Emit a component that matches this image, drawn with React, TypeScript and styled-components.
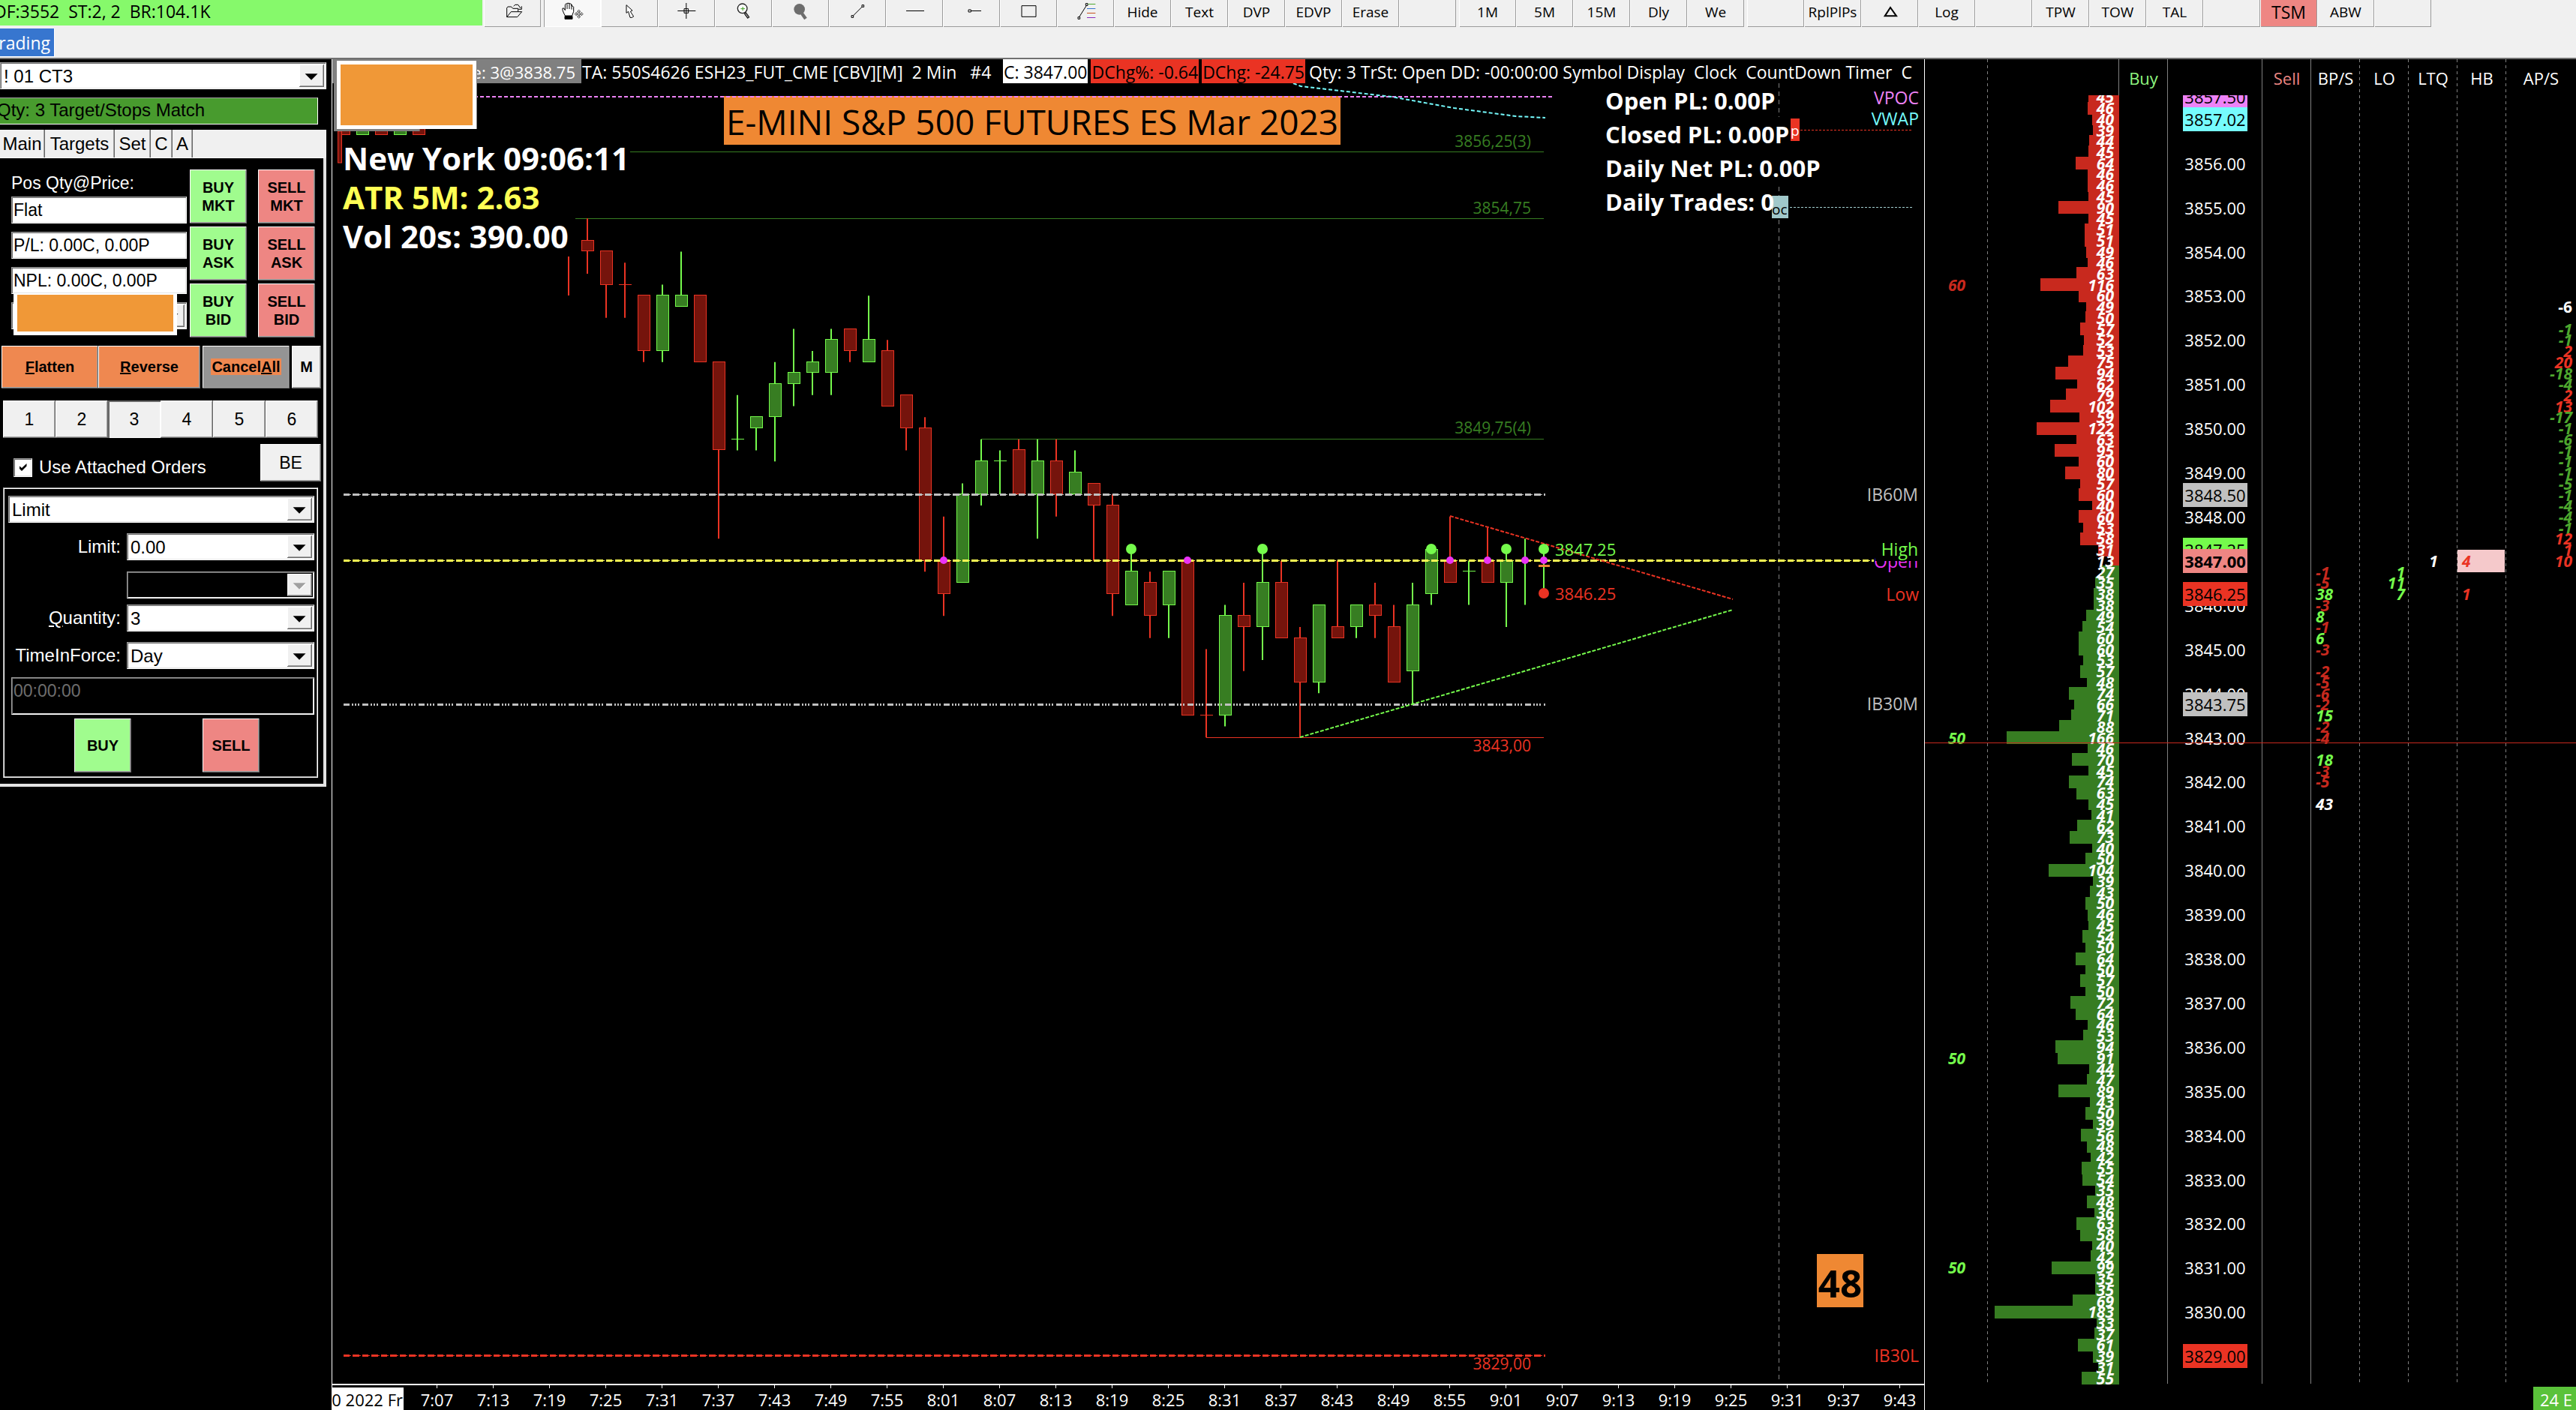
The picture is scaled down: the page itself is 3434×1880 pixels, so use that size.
import React from 'react';
import styled, { createGlobalStyle, css } from 'styled-components';

const UI = `'Open Sans', 'Noto Sans', sans-serif`;
const CLASSIC = `'Liberation Sans', Arial, sans-serif`;

const color = {
  face: '#f0f0f0',
  lime: '#75fb4c',
  green: '#377d22',
  red: '#ea3323',
  darkRed: '#c8291e',
  maroon: '#75140c',
  salmon: '#ee8683',
  mint: '#a0fc8e',
  orange: '#ef8833',
  magenta: '#ea33f7',
  violet: '#ee82f7',
  cyan: '#75fbfd',
  yellow: '#ffff54',
  silver: '#c0c0c0',
  grid: '#7f7f7f',
};

const GlobalStyle = createGlobalStyle`
  *, *::before, *::after { box-sizing: border-box; }
  body { margin: 0; background: #000; overflow: hidden; }
  button, input, select { font: inherit; margin: 0; padding: 0; border: 0; border-radius: 0; }
`;

const Page = styled.div`
  display: flex;
  flex-direction: column;
  height: 100vh;
  background: #000;
  color: #fff;
  font-family: ${UI};
  font-size: 22px;
`;

/* ---------- top bars ---------- */

const TopBar = styled.header`
  flex: none;
  background: ${color.face};
  border-bottom: 2px solid #707070;
`;

const ToolRow = styled.div`
  display: flex;
  height: 36px;
`;

const Status = styled.div`
  flex: none;
  width: 643px;
  height: 34px;
  margin-right: 2px;
  background: #86f96b;
  color: #000;
  font-size: 23px;
  line-height: 31px;
  text-indent: -8px;
  white-space: pre;
  overflow: hidden;
`;

const ToolGroup = styled.div`
  display: flex;
  margin-right: 4px;
`;

const Tool = styled.button<{ $mode?: 'pressed' | 'alert' }>`
  flex: none;
  width: 76px;
  height: 36px;
  padding-bottom: 4px;
  color: #000;
  font-size: 19px;
  line-height: 30px;
  background: ${color.face};
  box-shadow: inset 1px 0 #fff, inset -1px -1px #9b9b9b;
  ${p => p.$mode === 'pressed' && css`
    background: #f8f8f8;
    box-shadow: inset 1px 0 #9b9b9b, inset -1px -1px #fff;
  `}
  ${p => p.$mode === 'alert' && css`
    background: ${color.salmon};
    font-size: 23px;
  `}
  svg { display: block; }
`;

const TabRow = styled.nav`
  display: flex;
  height: 41px;
  padding-top: 2px;
`;

const WorkTab = styled.button`
  display: flex;
  justify-content: flex-end;
  align-items: center;
  width: 73px;
  height: 38px;
  padding-right: 5px;
  overflow: hidden;
  background: #3776cf;
  border-right: 1px solid #fff;
  border-bottom: 1px solid #fff;
  color: #fff;
  font-size: 23px;
`;

const Main = styled.main`
  flex: 1;
  display: flex;
  min-height: 0;
`;

/* ---------- order entry ---------- */

const raised = css`
  box-shadow: inset -1px -1px #696969, inset 1px 1px #fff, inset -2px -2px #a0a0a0;
`;
const sunken = css`
  border: 1px solid;
  border-color: #a0a0a0 #fff #fff #a0a0a0;
  box-shadow: inset 1px 1px #696969, inset -1px -1px #e3e3e3;
`;

const Entry = styled.aside`
  flex: none;
  width: 442px;
  padding-top: 4px;
  font-family: ${CLASSIC};
  font-size: 24px;
`;

const Combo = styled.div<{ $disabled?: boolean }>`
  ${sunken}
  display: flex;
  height: 36px;
  padding: 2px;
  background: ${p => (p.$disabled ? '#000' : '#fff')};
  select {
    appearance: none;
    flex: 1;
    min-width: 0;
    padding-left: 2px;
    background: transparent;
    color: #000;
    outline: none;
  }
  svg {
    ${raised}
    flex: none;
    width: 33px;
    height: 100%;
    background: ${color.face};
  }
`;

const AccountCombo = styled.div`
  width: 435px;
  margin-bottom: 11px;
`;

const MatchNote = styled.div`
  width: 424px;
  height: 36px;
  margin-bottom: 7px;
  background: #489b2e;
  border-top: 1px solid #a0a0a0;
  border-right: 1px solid #fff;
  border-bottom: 1px solid #fff;
  color: #000;
  line-height: 32px;
  text-indent: -4px;
`;

const TabStrip = styled.div`
  display: flex;
  width: 435px;
  height: 37px;
  background: ${color.face};
`;

const StripTab = styled.button<{ $w: number }>`
  width: ${p => p.$w}px;
  background: ${color.face};
  color: #000;
  border-right: 1px solid #696969;
  box-shadow: inset -1px 0 #a0a0a0;
  text-align: center;
  white-space: nowrap;
`;

const TabPage = styled.div`
  display: flex;
  flex-direction: column;
  width: 435px;
  border-top: 1px solid #fff;
  border-right: 4px solid #e3e3e3;
  border-bottom: 4px solid #e3e3e3;
  padding: 15px 0 8px 4px;
`;

const Position = styled.div`
  display: flex;
  height: 224px;
  margin-bottom: 11px;
`;

const Fields = styled.div`
  flex: none;
  display: flex;
  flex-direction: column;
  gap: 11px;
  width: 234px;
  margin: 5px 4px 0 11px;
  font-size: 23px;
`;

const FieldLabel = styled.label`
  display: flex;
  flex-direction: column;
  gap: 4px;
  line-height: 27px;
`;

const Readout = styled.input`
  ${sunken}
  width: 100%;
  height: 36px;
  padding-left: 2px;
  background: #fff;
  color: #000;
`;

const CoveredCombo = styled.div`
  position: relative;
`;

const Cover = styled.div`
  position: absolute;
  left: 3px;
  top: -11px;
  width: 218px;
  height: 55px;
  background: #f09837;
  border: 5px solid #fff;
  border-top-width: 1px;
`;

const TradeColumn = styled.div`
  flex: none;
  display: flex;
  flex-direction: column;
  gap: 4px;
  & + & { margin-left: 15px; }
`;

const TradeButton = styled.button<{ $side: 'buy' | 'sell' }>`
  ${raised}
  flex: none;
  width: 76px;
  height: 72px;
  background: ${p => (p.$side === 'buy' ? color.mint : color.salmon)};
  color: #000;
  font-size: 20px;
  font-weight: 700;
  line-height: 24px;
`;

const ActionRow = styled.div`
  display: flex;
  gap: 3px;
  height: 57px;
  margin: 0 0 16px -2px;
`;

const ActionPair = styled.div`
  display: flex;
`;

const Action = styled.button<{ $w: number; $bg: string }>`
  ${raised}
  flex: none;
  width: ${p => p.$w}px;
  height: 57px;
  background: ${p => p.$bg};
  color: #000;
  font-size: 20px;
  font-weight: 700;
  mark { background: #ef8850; color: #000; padding: 0 1px; }
`;

const NumberRow = styled.div`
  display: flex;
  margin-bottom: 8px;
`;

const NumberButton = styled.button<{ $active?: boolean }>`
  width: 70px;
  height: 50px;
  background: ${color.face};
  color: #000;
  font-size: 23px;
  ${p => (p.$active
    ? css`box-shadow: inset 2px 2px #696969, inset -1px -1px #fff;`
    : raised)}
`;

const AttachRow = styled.div`
  display: flex;
  justify-content: space-between;
  width: 424px;
  height: 50px;
  margin-bottom: 8px;
`;

const AttachLabel = styled.label`
  display: flex;
  align-items: center;
  gap: 9px;
  padding: 12px 0 0 14px;
  white-space: nowrap;
  font-size: 24px;
  input {
    ${sunken}
    appearance: none;
    width: 25px;
    height: 25px;
    background: #fff;
    display: grid;
    place-items: center;
  }
  input:checked::before {
    content: '';
    width: 10px;
    height: 10px;
    background: #000;
    clip-path: polygon(0 30%, 35% 60%, 100% 0, 100% 35%, 35% 100%, 0 65%);
  }
`;

const SmallButton = styled.button`
  ${raised}
  width: 81px;
  height: 50px;
  background: ${color.face};
  color: #000;
  font-size: 23px;
`;

const OrderBox = styled.form`
  display: flex;
  flex-direction: column;
  width: 420px;
  padding: 10px 4px 6px 6px;
  border: 1px solid #a0a0a0;
  border-color: #a0a0a0 #fff #fff #a0a0a0;
  box-shadow: inset 1px 1px #fff, inset -1px -1px #a0a0a0;
`;

const OrderType = styled.div`
  margin-bottom: 14px;
`;

const OrderRow = styled.div<{ $after: number }>`
  display: grid;
  grid-template-columns: 150px 1fr;
  gap: 8px;
  align-items: center;
  margin-bottom: ${p => p.$after}px;
  label { text-align: right; }
`;

const TimeBox = styled.input`
  ${sunken}
  height: 50px;
  margin: 0 0 5px 4px;
  padding: 0 2px 14px;
  background: #000;
  color: #6d6d6d;
  font-size: 23px;
`;

const SubmitRow = styled.div`
  display: flex;
  gap: 95px;
  padding-left: 88px;
`;

/* ---------- chart ---------- */

const ChartPanel = styled.section`
  position: relative;
  flex: 1;
  min-width: 0;
  display: flex;
  flex-direction: column;
  border-left: 1px solid #fff;
  overflow: hidden;
`;

const ChartHead = styled.div`
  flex: none;
  display: flex;
  height: 32px;
  font-size: 23px;
  line-height: 34px;
  white-space: pre;
  overflow: hidden;
`;

const HeadTag = styled.span<{ $bg?: string; $fg?: string }>`
  flex: none;
  margin-right: 4px;
  padding: 0 1px;
  background: ${p => p.$bg ?? 'transparent'};
  color: ${p => p.$fg ?? '#fff'};
`;

const OrderTag = styled(HeadTag)`
  width: 332px;
  margin-right: 0;
  padding-right: 8px;
  font-size: 22px;
  text-align: right;
`;

const SymbolTag = styled(HeadTag)`
  min-width: 558px;
`;

const Plot = styled.svg`
  flex: 1;
  width: 100%;
  min-height: 0;
  display: block;
  position: relative;
  font-family: ${UI};
`;

const TimeAxis = styled.div`
  flex: none;
  display: flex;
  height: 35px;
  border-top: 2px solid #fff;
  line-height: 39px;
`;

const DateBox = styled.div`
  flex: none;
  display: flex;
  justify-content: flex-end;
  width: 95px;
  height: 31px;
  margin: 3px 7px 0 0;
  padding-right: 1px;
  background: #fff;
  color: #000;
  line-height: 32px;
  white-space: nowrap;
  overflow: hidden;
`;

const TimeTick = styled.div`
  flex: 0 0 75px;
  text-align: center;
  background: linear-gradient(#fff, #fff) 37px 0 / 1px 4px no-repeat;
`;

const Covered = styled.div`
  position: absolute;
  left: 2px;
  top: 0;
  width: 191px;
  height: 96px;
  padding: 2px 0 0 4px;
  background: #808080;
  clip-path: polygon(0 0, 100% 0, 100% 93px, 60% 93px, 60% 100%, 0 100%);
  &::before {
    content: '';
    display: block;
    width: 186px;
    height: 91px;
    border: 5px solid #fff;
    background: #f09837;
  }
`;

const Title = styled.h1`
  position: absolute;
  left: 522px;
  top: 49px;
  height: 65px;
  margin: 0;
  padding: 0 3px;
  background: ${color.orange};
  color: #000;
  font-size: 46px;
  font-weight: 400;
  line-height: 69px;
  white-space: nowrap;
`;

const Readings = styled.div`
  position: absolute;
  left: 14px;
  top: 106px;
  font-size: 42px;
  font-weight: 700;
  line-height: 52px;
  div:nth-child(2) { color: ${color.yellow}; }
`;

const Results = styled.div`
  position: absolute;
  left: 1697px;
  top: 33px;
  font-size: 31px;
  font-weight: 700;
  line-height: 45px;
`;

const Countdown = styled.div`
  position: absolute;
  right: 81px;
  bottom: 137px;
  width: 62px;
  height: 71px;
  background: ${color.orange};
  color: #000;
  font-size: 51px;
  font-weight: 700;
  line-height: 77px;
  text-align: center;
`;

/* ---------- ladder ---------- */

const LadderPanel = styled.section`
  flex: none;
  width: 869px;
  display: flex;
  flex-direction: column;
  border-left: 1px solid #fff;
  overflow: hidden;
`;

const Ladder = styled.div`
  flex: 1;
  min-height: 0;
  position: relative;
  display: grid;
  grid-template-columns: 84px 175px 65px 126px 65px 65px 65px 65px 65px 1fr;
  grid-template-rows: 43px repeat(117, minmax(0, 1fr));
`;

const Rail = styled.div<{ $dash?: boolean }>`
  grid-row: 1 / -1;
  background: linear-gradient(${color.grid}, ${color.grid}) right top / 1px 100% no-repeat;
  ${p => p.$dash && css`
    background: repeating-linear-gradient(${color.grid} 0 4px, transparent 4px 8px) right top / 1px 100% no-repeat;
  `}
`;

const HeadCell = styled.div<{ $fg: string }>`
  grid-row: 1;
  align-self: center;
  padding-top: 7px;
  text-align: center;
  color: ${p => p.$fg};
`;

const Lane = styled.div`
  grid-row: 2 / -1;
  display: grid;
  grid-template-rows: repeat(117, minmax(0, 1fr));
  clip-path: inset(5px 0 -2px 0);
`;

const Bar = styled.div<{ $bg: string }>`
  grid-column: 1;
  justify-self: end;
  align-self: center;
  height: 17px;
  background: ${p => p.$bg};
`;

const BarText = styled.span`
  grid-column: 1;
  justify-self: end;
  align-self: center;
  padding-right: 7px;
  font-size: 21px;
  font-weight: 700;
  font-style: italic;
  line-height: 24px;
`;

const Figure = styled.div<{ $fg: string; $align?: string; $upright?: boolean }>`
  align-self: center;
  padding: 0 5px 0 6px;
  color: ${p => p.$fg};
  font-size: 21px;
  font-weight: 700;
  font-style: ${p => (p.$upright ? 'normal' : 'italic')};
  line-height: 24px;
  text-align: ${p => p.$align ?? 'left'};
`;

const HitCell = styled.div`
  align-self: center;
  height: 30px;
  margin-right: 2px;
  background: #f5c9cb;
`;

const Price = styled.div<{ $bg?: string; $last?: boolean }>`
  grid-column: 1;
  justify-self: center;
  align-self: center;
  height: 32px;
  padding: 0 2px;
  line-height: 32px;
  background: ${p => p.$bg ?? 'transparent'};
  color: ${p => (p.$bg ? '#000' : '#fff')};
  font-weight: ${p => (p.$last ? 700 : 400)};
`;

const StopLine = styled.div`
  position: absolute;
  left: 0;
  right: 0;
  top: 911px;
  height: 1px;
  background: ${color.darkRed};
`;

const LadderFoot = styled.footer`
  flex: none;
  display: flex;
  justify-content: flex-end;
  height: 35px;
  padding-top: 4px;
`;

const Clock = styled.div`
  width: 57px;
  padding-left: 9px;
  background: #5ac23a;
  line-height: 34px;
  white-space: nowrap;
  overflow: hidden;
`;

/* ---------- toolbar icons ---------- */

const Icon = ({ box, children }: { box: string; children: React.ReactNode }) => (
  <svg width="76" height="36" viewBox={box} fill="none" stroke="#000" strokeWidth="3">{children}</svg>
);
const zoomed = (start: number) => `${start} 0 228 108`;

const icons: Record<string, React.ReactNode> = {
  Open: (
    <Icon box={zoomed(-45)}>
      <path d="M47 68V31l4-4h14l6 7h21v12M47 68l17-21h43L89 68z" />
      <path d="M74 25l6-6h12l10 14M106 25v12H94" />
    </Icon>
  ),
  Scroll: (
    <Icon box={zoomed(200)}>
      <path fill="#fff" d="M285 63l-6-12-4-10v-8h5l5 8V20l3-5h4l1-2h9l1 2h4l4 3v6h4l4 4v18l-6 17z" />
      <path d="M293 16v20M302 14v22M311 18v20" />
      <path fill="#000" d="M284 65h30v11h-30z" />
      <path fill="#fff" strokeWidth="2" d="M340 39l-6 7h4v8h-8v-4l-7 6 7 6v-4h8v8h-4l6 7 6-7h-4v-8h8v4l7-6-7-6v4h-8v-8h4z" />
    </Icon>
  ),
  Pointer: (
    <Icon box={zoomed(428)}><path fill="#fff" d="M530 20v32l8-6 7 24h7l7-4-13-20 8-4z" /></Icon>
  ),
  Crosshair: (
    <Icon box={zoomed(656)}><path d="M735 43.500h72M769.500 12v63M761 35h17v17h-17z" /></Icon>
  ),
  'Zoom in': (
    <Icon box={zoomed(884)}>
      <path strokeWidth="11" stroke="#222" d="M1004 51l15 21" />
      <path stroke="#c9c9c9" d="M1006 54l11 15" />
      <circle cx="994" cy="34" r="19" fill="#fff" stroke="#222" strokeWidth="4" />
      <path stroke="#3fa024" d="M987 35h17M995.500 27v16" />
    </Icon>
  ),
  'Zoom out': (
    <Icon box={zoomed(1112)}>
      <circle cx="1222" cy="37" r="22" fill="#6d6d6d" stroke="none" />
      <path stroke="#6d6d6d" strokeWidth="13" d="M1232 54l15 21" />
    </Icon>
  ),
  'Trend line': (
    <Icon box={zoomed(1340)}><path d="M1438 62l34-34M1430 62h8v8h-8zM1472 20h8v8h-8z" /></Icon>
  ),
  'Horizontal line': <Icon box="0 0 228 108"><path d="M81 43.500h72" /></Icon>,
  Ray: <Icon box="0 0 228 108"><path d="M113 43.500h40M102 39h10v9h-10z" /></Icon>,
  Rectangle: <Icon box="0 0 228 108"><path d="M87 23h57v44H87z" /></Icon>,
  Retracement: (
    <Icon box="0 0 228 108">
      <path d="M89 68l29-46M84 68h8v8h-8zM115 14h8v8h-8z" />
      <path stroke="#4ea72e" d="M124 16.500h30" />
      <path stroke="#3776cf" d="M120 34.500h34" />
      <path stroke="#c8501e" d="M120 52.500h34" />
      <path stroke="#8a2bbf" d="M120 70.500h34" />
    </Icon>
  ),
  Delta: <Icon box="0 0 228 108"><path strokeWidth="6" d="M95 64l22-34 24 34z" /></Icon>,
};

const toolGroups: string[][] = [
  ['Open'],
  ['Scroll', 'Pointer', 'Crosshair', 'Zoom in', 'Zoom out', 'Trend line', 'Horizontal line', 'Ray', 'Rectangle',
    'Retracement', 'Hide', 'Text', 'DVP', 'EDVP', 'Erase', ''],
  ['1M', '5M', '15M', 'Dly', 'We'],
  ['', 'RplPlPs', 'Delta', 'Log', '', 'TPW', 'TOW', 'TAL', '', 'TSM', 'ABW', ''],
];

const Arrow = ({ off }: { off?: boolean }) => (
  <svg viewBox="0 0 33 32" aria-hidden="true">
    {off && <path fill="#fff" d="M8 14h18l-9 9z" />}
    <path fill={off ? '#a0a0a0' : '#000'} d="M7 13h18l-9 9z" />
  </svg>
);

const Drop = ({ id, label, value, disabled }: { id: string; label?: string; value: string; disabled?: boolean }) => (
  <Combo $disabled={disabled}>
    <select id={id} aria-label={label} disabled={disabled} defaultValue={value}>
      <option value={value}>{value}</option>
    </select>
    <Arrow off={disabled} />
  </Combo>
);

/* ---------- chart data ---------- */

const TICK = 14.72;
const TOP = 291.3;
const yTick = (t: number) => TOP + t * TICK;

// side, body top, body bottom, high, low: quarter-point ticks below 3854.75
type Candle = ['r' | 'g', number, number, number, number];
const candles: Candle[] = [
  ['r', 2, 3, 0, 5], ['r', 3, 6, 3, 9], ['r', 6, 6, 4, 9], ['r', 7, 12, 7, 13], ['g', 7, 12, 6, 13],
  ['g', 7, 8, 3, 8], ['r', 7, 13, 7, 13], ['r', 13, 21, 13, 29], ['g', 20, 20, 16, 21], ['g', 18, 19, 18, 21],
  ['g', 15, 18, 13, 22], ['g', 14, 15, 10, 17], ['g', 13, 14, 12, 16], ['g', 11, 14, 10, 16], ['r', 10, 12, 10, 13],
  ['g', 11, 13, 7, 13], ['r', 12, 17, 11, 17], ['r', 16, 19, 16, 21], ['r', 19, 31, 18, 32], ['r', 31, 34, 27, 36],
  ['g', 25, 33, 24, 33], ['g', 22, 25, 20, 26], ['g', 22, 22, 21, 25], ['r', 21, 25, 20, 25], ['g', 22, 25, 20, 29],
  ['r', 22, 25, 20, 27], ['g', 23, 25, 21, 25], ['r', 24, 26, 24, 31], ['r', 26, 34, 25, 36], ['g', 32, 35, 30, 35],
  ['r', 33, 36, 32, 38], ['g', 32, 35, 32, 38], ['r', 31, 45, 31, 45], ['r', 45, 45, 39, 47], ['g', 36, 45, 35, 46],
  ['r', 36, 37, 33, 41], ['g', 33, 37, 30, 40], ['r', 33, 38, 31, 38], ['r', 38, 42, 37, 47], ['g', 35, 42, 35, 43],
  ['r', 37, 38, 31, 38], ['g', 35, 37, 35, 38], ['r', 35, 36, 33, 38], ['r', 37, 42, 35, 42], ['g', 35, 41, 33, 44],
  ['g', 30, 34, 30, 35], ['r', 31, 33, 27, 33], ['g', 32, 32, 31, 35], ['r', 31, 33, 28, 33], ['g', 31, 33, 30, 37],
  ['g', 31, 31, 29, 35], ['g', 31, 31, 30, 34],
];
const xBar = (i: number) => 783 + 25 * i;

const greenDots = [29, 36, 45, 49, 51];
const magentaDots = [19, 32, 46, 48, 50, 51];

const times = Array.from({ length: 27 }, (_, i) => {
  const m = 7 * 60 + 7 + i * 6;
  return `${Math.floor(m / 60)}:${String(m % 60).padStart(2, '0')}`;
});

const EARLY: Array<[number, 'r' | 'g']> = [[450, 'r'], [475, 'g'], [500, 'r'], [525, 'g'], [550, 'r']];

const stroke = { r: color.red, g: color.lime };
const fill = { r: color.maroon, g: color.green };

const Note = ({ x, y, c, end, size = 23, children }: {
  x: number; y: number; c: string; end?: boolean; size?: number; children: string;
}) => (
  <text x={x} y={y + (size > 21 ? 8 : 7)} fill={c} fontSize={size} textAnchor={end ? 'end' : 'start'}>{children}</text>
);

const ChartPlot = () => (
  <Plot role="img" aria-label="Two minute candles">
    <g transform="translate(-443 -111)">
      <g stroke="#808080" strokeDasharray="6 5">
        <path d="M2371.500 111V156M2371.500 249V1844" />
      </g>
      {EARLY.map(([x, s]) => (
        <rect key={x} x={x + 0.5} y={160.500} width={16} height={19} fill={fill[s]} stroke={stroke[s]} />
      ))}
      <rect x={450.500} y={175} width={5} height={42} fill={color.maroon} stroke={color.red} />
      <g stroke={color.green} strokeWidth="1">
        <path d="M840 202.500H2058M767 291.500H2058M1308 585.500H2058" />
      </g>
      <path d="M758 342V394" stroke={color.red} strokeWidth="2" />
      {candles.map(([s, top, bottom, high, low], i) => {
        const x = xBar(i);
        const bodyTop = Math.round(yTick(top));
        const bodyBottom = Math.round(yTick(bottom));
        return (
          <g key={i} stroke={stroke[s]}>
            <path strokeWidth="2" d={`M${x} ${yTick(high)}V${yTick(low)}`} />
            {top === bottom
              ? i < 50 && <path strokeWidth="1" d={`M${x - 8} ${bodyTop - 0.5}h17`} />
              : <rect x={x - 7.5} y={bodyTop - 0.5} width={16} height={bodyBottom - bodyTop} fill={fill[s]} />}
          </g>
        );
      })}
      <path d="M1608 983.500H2058" stroke={color.red} strokeWidth="1" />
      <path d="M632 129H2072" stroke={color.violet} strokeWidth="2" strokeDasharray="5 3" />
      <path d="M1724 111L1734 115L1855 129L1938 144L1983 150L2021 155L2060 157" stroke={color.cyan} strokeWidth="2" strokeDasharray="5 3" fill="none" />
      <g strokeWidth="3" strokeDasharray="8 4 9 4">
        <path d="M458 659.500H2060" stroke={color.silver} />
        <path d="M458 747.500H2498" stroke={color.yellow} />
        <path d="M458 1807.500H2060" stroke={color.red} />
      </g>
      <g strokeWidth="1">
        <path d="M458 659.500H2060" stroke={color.silver} strokeDasharray="10 2 11 2" />
        <path d="M458 747.500H2498" stroke={color.yellow} strokeDasharray="10 2 11 2" />
        <path d="M458 1807.500H2060" stroke={color.red} strokeDasharray="10 2 11 2" />
      </g>
      <path d="M458 939.500H2060" stroke={color.silver} strokeWidth="3" strokeDasharray="8 3 2 2 2 2 2 4" />
      <g strokeWidth="2" strokeDasharray="5 2">
        <path d="M1933 688L2310 799" stroke={color.red} />
        <path d="M1733 983L2310 813" stroke={color.lime} />
      </g>
      {greenDots.map(i => <circle key={i} cx={xBar(i)} cy={732} r={7} fill={color.lime} />)}
      {magentaDots.map(i => <circle key={i} cx={xBar(i)} cy={747} r={5} fill={color.magenta} />)}
      <circle cx={2058} cy={791} r={7} fill={color.red} />
      <path d="M2051 754.500H2066" stroke={color.orange} strokeWidth="3" />

      <g strokeWidth="1" strokeDasharray="3 2">
        <path d="M2400 173.500H2550" stroke={color.red} />
        <path d="M2386 276.500H2550" stroke="#a3cfd0" />
      </g>
      <rect x={2387} y={158} width={12} height={30} fill={color.red} />
      <Note x={2387} y={174} c="#fff" size={19}>p</Note>
      <rect x={2362} y={261} width={22} height={30} fill="#a0c8ca" />
      <Note x={2362} y={279} c="#000" size={19}>oc</Note>

      <Note x={2558} y={131} c={color.violet} end>VPOC</Note>
      <Note x={2558} y={159} c={color.cyan} end>VWAP</Note>
      <Note x={2557} y={660} c={color.silver} end>IB60M</Note>
      <Note x={2557} y={749} c={color.magenta} end>Open</Note>
      <rect x={2500} y={722} width={58} height={26} fill="#000" />
      <Note x={2557} y={733} c={color.lime} end>High</Note>
      <Note x={2558} y={793} c={color.red} end>Low</Note>
      <Note x={2557} y={939} c={color.silver} end>IB30M</Note>
      <Note x={2558} y={1808} c={color.red} end>IB30L</Note>
      <Note x={2073} y={733} c={color.lime} size={22}>3847.25</Note>
      <Note x={2073} y={792} c={color.red} size={22}>3846.25</Note>
      <Note x={2041} y={189} c={color.green} end size={21}>3856,25(3)</Note>
      <Note x={2041} y={278} c={color.green} end size={21}>3854,75</Note>
      <Note x={2041} y={571} c={color.green} end size={21}>3849,75(4)</Note>
      <Note x={2041} y={995} c={color.red} end size={21}>3843,00</Note>
      <Note x={2041} y={1819} c={color.red} end size={21}>3829,00</Note>
    </g>
  </Plot>
);

/* ---------- ladder data ---------- */

const FIRST_PRICE = 3857.5;
const laneRow = (price: number) => Math.round((FIRST_PRICE - price) * 4) + 1;
const rowOf = (price: number) => laneRow(price) + 1;

const depth = [
  45, 46, 40, 39, 44, 45, 64, 46, 46, 45, 90, 45, 51, 51, 49, 46, 63, 116, 60, 49, 50, 57, 52, 53, 75, 94, 62, 79, 102,
  59, 122, 63, 95, 60, 80, 57, 60, 40, 60, 53, 58, 31, 13, 27, 35, 38, 38, 49, 54, 60, 60, 53, 57, 48, 74, 66, 71, 88,
  166, 46, 70, 45, 74, 63, 45, 41, 62, 73, 40, 50, 104, 39, 43, 50, 46, 45, 54, 50, 64, 50, 57, 50, 72, 64, 46, 53, 94,
  91, 44, 47, 89, 43, 50, 39, 56, 48, 42, 55, 54, 35, 48, 36, 63, 58, 40, 42, 99, 35, 35, 69, 183, 33, 37, 61, 39, 31, 55,
];

const L = color.lime;
const R = color.red;
const D = color.darkRed;
const G = '#4ea72e';
const W = '#fff';

// column, price, text, colour, alignment
type Mark = [number, number, string, string, string?];
const series = (col: number, from: number, items: string[], tint: (v: string) => string, align?: string): Mark[] =>
  items.map((v, i): Mark => [col, from - i * 0.25, v, tint(v), align]).filter(m => m[2] !== '');

const marks: Mark[] = [
  [1, 3853.25, '60', D, 'center'], [1, 3843, '50', L, 'center'], [1, 3835.75, '50', L, 'center'], [1, 3831, '50', L, 'center'],
  ...series(6, 3846.75,
    ['-1', '-5', '38', '-3', '8', '-1', '6', '-3', '', '-2', '-5', '-6', '-2', '15', '-2', '-4', '', '18', '-3', '-5'],
    v => (v.startsWith('-') ? D : L)),
  [6, 3841.5, '43', W],
  ...series(7, 3846.75, ['1', '11', '7'], () => L, 'right'),
  [8, 3847, '1', W, 'center'],
  [9, 3847, '4', R], [9, 3846.25, '1', R],
  ...series(10, 3852.25,
    ['-1', '-1', '2', '20', '-18', '-4', '2', '13', '-17', '-1', '-6', '-1', '-1', '-1', '-5', '-1', '-4', '-4', '-1', '12', '1', '10'],
    v => (v.startsWith('-') ? G : R), 'right'),
];

const heads: Array<[number, string, string]> = [
  [3, 'Buy', '#8ff57f'], [5, 'Sell', color.salmon], [6, 'BP/S', W], [7, 'LO', W], [8, 'LTQ', W], [9, 'HB', W], [10, 'AP/S', W],
];

const tags: Array<[number, string, string]> = [
  [3857.5, '3857.50', color.violet], [3857, '3857.02', color.cyan], [3848.5, '3848.50', color.silver],
  [3847.25, '3847.25', color.lime], [3846.25, '3846.25', color.red], [3843.75, '3843.75', color.silver],
  [3829, '3829.00', color.red],
];

const PriceLadder = () => (
  <LadderPanel>
    <Ladder>
      {[1, 2, 3, 4, 5, 6, 7, 8, 9].map(c => (
        <Rail key={c} $dash={c === 1 || c > 5} style={{ gridColumn: c }} />
      ))}
      {heads.map(([c, text, fg]) => <HeadCell key={c} $fg={fg} style={{ gridColumn: c }}>{text}</HeadCell>)}
      <Lane style={{ gridColumn: 2 }}>
        {depth.map((v, i) => (
          <Bar key={i} $bg={i < 43 ? color.darkRed : color.green} style={{ gridRow: i + 1, width: Math.round(v * 0.905) }} />
        ))}
        {depth.map((v, i) => <BarText key={i} style={{ gridRow: i + 1 }}>{v}</BarText>)}
      </Lane>
      <HitCell style={{ gridColumn: 9, gridRow: rowOf(3847) }} />
      {marks.map(([c, price, text, fg, align], i) => (
        <Figure key={i} $fg={fg} $align={align} style={{ gridColumn: c, gridRow: rowOf(price) }}>{text}</Figure>
      ))}
      <Figure $fg={W} $align="right" $upright style={{ gridColumn: 10, gridRow: rowOf(3852.75) }}>-6</Figure>
      <Lane style={{ gridColumn: 4 }}>
        {Array.from({ length: 27 }, (_, i) => 3856 - i).filter(p => p !== 3847).map(p => (
          <Price key={p} style={{ gridRow: laneRow(p) }}>{p}.00</Price>
        ))}
        {tags.map(([p, text, bg]) => <Price key={text} $bg={bg} style={{ gridRow: laneRow(p) }}>{text}</Price>)}
        <Price $bg={color.salmon} $last style={{ gridRow: laneRow(3847) }}>3847.00</Price>
      </Lane>
      <StopLine />
    </Ladder>
    <LadderFoot><Clock>24 E</Clock></LadderFoot>
  </LadderPanel>
);

const OrderEntry = () => (
  <Entry>
    <AccountCombo><Drop id="account" label="Account" value="! 01 CT3" /></AccountCombo>
    <MatchNote>Qty: 3 Target/Stops Match</MatchNote>
    <TabStrip role="tablist">
      {([['Main', 60], ['Targets', 93], ['Set', 48], ['C', 29], ['A', 27]] as Array<[string, number]>).map(([t, w]) => (
        <StripTab key={t} role="tab" $w={w}>{t}</StripTab>
      ))}
    </TabStrip>
    <TabPage>
      <Position>
        <Fields>
          <FieldLabel>Pos Qty@Price:<Readout readOnly value="Flat" /></FieldLabel>
          <Readout readOnly aria-label="Profit and loss" value="P/L: 0.00C, 0.00P" />
          <Readout readOnly aria-label="Net profit and loss" value="NPL: 0.00C, 0.00P" />
          <CoveredCombo><Drop id="route" label="Route" value="" /><Cover /></CoveredCombo>
        </Fields>
        {(['buy', 'sell'] as const).map(side => (
          <TradeColumn key={side}>
            {['MKT', 'ASK', 'BID'].map(k => (
              <TradeButton key={k} $side={side}>{side.toUpperCase()}<br />{k}</TradeButton>
            ))}
          </TradeColumn>
        ))}
      </Position>
      <ActionRow>
        <ActionPair>
          <Action $w={129} $bg="#ef8850"><u>F</u>latten</Action>
          <Action $w={136} $bg="#ef8850"><u>R</u>everse</Action>
        </ActionPair>
        <Action $w={116} $bg="#949494"><mark>Cancel<u>A</u>ll</mark></Action>
        <Action $w={39} $bg={color.face}>M</Action>
      </ActionRow>
      <NumberRow>
        {[1, 2, 3, 4, 5, 6].map(n => <NumberButton key={n} $active={n === 3}>{n}</NumberButton>)}
      </NumberRow>
      <AttachRow>
        <AttachLabel><input type="checkbox" defaultChecked />Use Attached Orders</AttachLabel>
        <SmallButton>BE</SmallButton>
      </AttachRow>
      <OrderBox onSubmit={e => e.preventDefault()}>
        <OrderType><Drop id="type" label="Order type" value="Limit" /></OrderType>
        <OrderRow $after={15}><label htmlFor="limit">Limit:</label><Drop id="limit" value="0.00" /></OrderRow>
        <OrderRow $after={8}><span /><Drop id="second" label="Second price" value="" disabled /></OrderRow>
        <OrderRow $after={14}><label htmlFor="qty"><u>Q</u>uantity:</label><Drop id="qty" value="3" /></OrderRow>
        <OrderRow $after={11}><label htmlFor="tif">TimeInForce:</label><Drop id="tif" value="Day" /></OrderRow>
        <TimeBox aria-label="Good till time" readOnly value="00:00:00" />
        <SubmitRow>
          <TradeButton $side="buy">BUY</TradeButton>
          <TradeButton $side="sell">SELL</TradeButton>
        </SubmitRow>
      </OrderBox>
    </TabPage>
  </Entry>
);

export default function App() {
  return (
    <Page>
      <GlobalStyle />
      <TopBar>
        <ToolRow>
          <Status>DF:3552  ST:2, 2  BR:104.1K</Status>
          {toolGroups.map((group, g) => (
            <ToolGroup key={g}>
              {group.map((name, i) => (
                <Tool key={i} aria-label={name || 'Custom'}
                  $mode={name === 'Scroll' ? 'pressed' : name === 'TSM' ? 'alert' : undefined}>
                  {icons[name] ?? name}
                </Tool>
              ))}
            </ToolGroup>
          ))}
        </ToolRow>
        <TabRow><WorkTab>Trading</WorkTab></TabRow>
      </TopBar>
      <Main>
        <OrderEntry />
        <ChartPanel>
          <ChartHead>
            <OrderTag $bg="#808080">e: 3@3838.75</OrderTag>
            <SymbolTag>TA: 550S4626 ESH23_FUT_CME [CBV][M]  2 Min   #4</SymbolTag>
            <HeadTag $bg="#fff" $fg="#000">C: 3847.00</HeadTag>
            <HeadTag $bg={color.red} $fg="#000">DChg%: -0.64</HeadTag>
            <HeadTag $bg={color.red} $fg="#000">DChg: -24.75</HeadTag>
            <HeadTag>Qty: 3 TrSt: Open DD: -00:00:00 Symbol Display  Clock  CountDown Timer  C</HeadTag>
          </ChartHead>
          <Title>E-MINI S&amp;P 500 FUTURES ES Mar 2023</Title>
          <ChartPlot />
          <TimeAxis>
            <DateBox><span>0 2022 Fr</span></DateBox>
            {times.map(t => <TimeTick key={t}>{t}</TimeTick>)}
          </TimeAxis>
          <Covered />
          <Readings>
            <div>New York 09:06:11</div>
            <div>ATR 5M: 2.63</div>
            <div>Vol 20s: 390.00</div>
          </Readings>
          <Results>
            <div>Open PL: 0.00P</div>
            <div>Closed PL: 0.00P</div>
            <div>Daily Net PL: 0.00P</div>
            <div>Daily Trades: 0</div>
          </Results>
          <Countdown>48</Countdown>
        </ChartPanel>
        <PriceLadder />
      </Main>
    </Page>
  );
}
